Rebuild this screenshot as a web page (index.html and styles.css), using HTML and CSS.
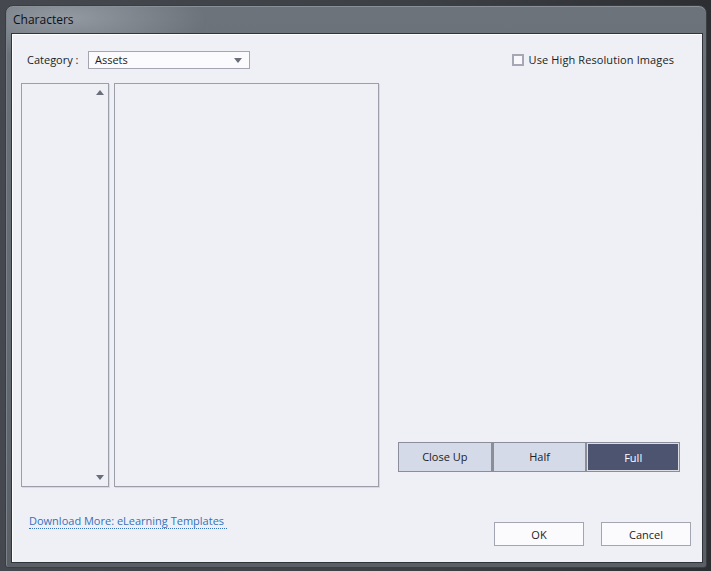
FILE: index.html
```html
<!DOCTYPE html>
<html>
<head>
<meta charset="utf-8">
<link rel="stylesheet" href="styles.css">
</head>
<body>
<div class="window">
  <div class="titlebar">Characters</div>
  <div class="panel">
    <div class="toprow">
      <span class="cat-label">Category :</span>
      <div class="select"><span class="sel-text">Assets</span><span class="tri-down"></span></div>
      <label class="hires"><span class="checkbox"></span><span class="hires-text">Use High Resolution Images</span></label>
    </div>
    <div class="main">
      <div class="list-left">
        <span class="tri-up small"></span>
        <span class="tri-down small"></span>
      </div>
      <div class="list-right"></div>
      <div class="side">
        <div class="seg">
          <div class="seg-btn">Close Up</div>
          <div class="seg-btn">Half</div>
          <div class="seg-btn active">Full</div>
        </div>
      </div>
    </div>
    <div class="bottom">
      <a class="link">Download More: eLearning Templates</a>
      <div class="btn">OK</div>
      <div class="btn cancel">Cancel</div>
    </div>
  </div>
</div>
</body>
</html>
```
FILE: styles.css
```css
html, body {
  margin: 0;
  padding: 0;
}
body {
  width: 711px;
  height: 571px;
  background: linear-gradient(90deg, #45484e 0%, #3c3f44 60%, #2c2e32 100%);
  font-family: "Open Sans", "Noto Sans", sans-serif;
  font-size: 11px;
  color: #1b1c20;
  overflow: hidden;
}
.window {
  position: relative;
  margin: 5px 0 0 5px;
  width: 700px;
  height: 561px;
  border: 1px solid #3a3d42;
  border-radius: 8px 8px 3px 3px;
  background:
    radial-gradient(ellipse 140px 40px at 60px 12px, rgba(180,186,194,0.55), rgba(180,186,194,0) 100%),
    linear-gradient(180deg, #6d737b 0%, #646a72 60%, #5a5f66 100%);
  box-shadow: inset 0 1px 0 #8a9098, inset 1px 0 0 #7c828a;
}
.titlebar {
  height: 27px;
  padding-left: 7px;
  line-height: 28px;
  font-size: 12px;
  color: #0e0f12;
}
.panel {
  margin-left: 5px;
  border: 1px solid #30343b;
  background: #eff0f5;
  box-shadow: inset 1px 1px 0 #ffffff;
  padding: 17px 0 0 9px;
  box-sizing: border-box;
  width: 692px;
  height: 530px;
}
.toprow {
  display: flex;
  align-items: center;
  height: 18px;
  padding-left: 6px;
  padding-right: 28px;
}
.cat-label {
  width: 61px;
  position: relative;
  top: -1px;
}
.select {
  width: 162px;
  height: 18px;
  box-sizing: border-box;
  border: 1px solid #a3a6b0;
  background: #fbfbfd;
  display: flex;
  align-items: center;
  justify-content: space-between;
  padding: 0 7px 0 6px;
}
.sel-text, .hires-text {
  position: relative;
  top: -1px;
}
.tri-down {
  width: 0;
  height: 0;
  border-left: 4px solid transparent;
  border-right: 4px solid transparent;
  border-top: 5px solid #6a6e7a;
}
.tri-up {
  width: 0;
  height: 0;
  border-left: 4px solid transparent;
  border-right: 4px solid transparent;
  border-bottom: 5px solid #6a6e7a;
}
.hires {
  margin-left: auto;
  display: flex;
  align-items: center;
  letter-spacing: 0.1px;
}
.checkbox {
  width: 8px;
  height: 8px;
  border: 2px solid #a5a8b4;
  background: #f8f8fb;
  margin-right: 5px;
}
.main {
  display: flex;
  margin-top: 14px;
  height: 404px;
}
.list-left {
  width: 88px;
  box-sizing: border-box;
  border: 1px solid #9c9fa9;
  box-shadow: 1px 1px 0 #d8dae2;
  display: flex;
  flex-direction: column;
  justify-content: space-between;
  align-items: flex-end;
  padding: 6px 4px 6px 0;
}
.list-right {
  margin-left: 5px;
  width: 265px;
  box-sizing: border-box;
  border: 1px solid #9c9fa9;
  box-shadow: 1px 1px 0 #d8dae2;
}
.side {
  margin-left: 19px;
  display: flex;
  flex-direction: column;
  justify-content: flex-end;
  padding-bottom: 15px;
}
.seg {
  display: flex;
  width: 282px;
  height: 30px;
}
.seg-btn {
  flex: 1;
  box-sizing: border-box;
  border: 1px solid #8b8e98;
  background: #d5dae8;
  display: flex;
  align-items: center;
  justify-content: center;
  color: #222;
  padding-bottom: 1px;
}
.seg-btn + .seg-btn {
  border-left-width: 2px;
}
.seg-btn.active {
  background: #4c5470;
  color: #ffffff;
  border: 1px solid #8b8e98;
  box-shadow: inset 0 0 0 1px #dcdee6;
  padding-bottom: 0;
}
.bottom {
  display: flex;
  align-items: flex-start;
  margin-top: 35px;
}
.link {
  margin-left: 8px;
  margin-top: -9px;
  color: #3470bd;
  border-bottom: 1px dotted #3470bd;
  padding-right: 3px;
  line-height: 15px;
}
.btn {
  width: 90px;
  height: 24px;
  box-sizing: border-box;
  border: 1px solid #a3a6b0;
  background: #fbfbfd;
  display: flex;
  align-items: center;
  justify-content: center;
  color: #222;
  margin-left: auto;
}
.btn.cancel {
  margin-left: 17px;
  margin-right: 11px;
}
```
